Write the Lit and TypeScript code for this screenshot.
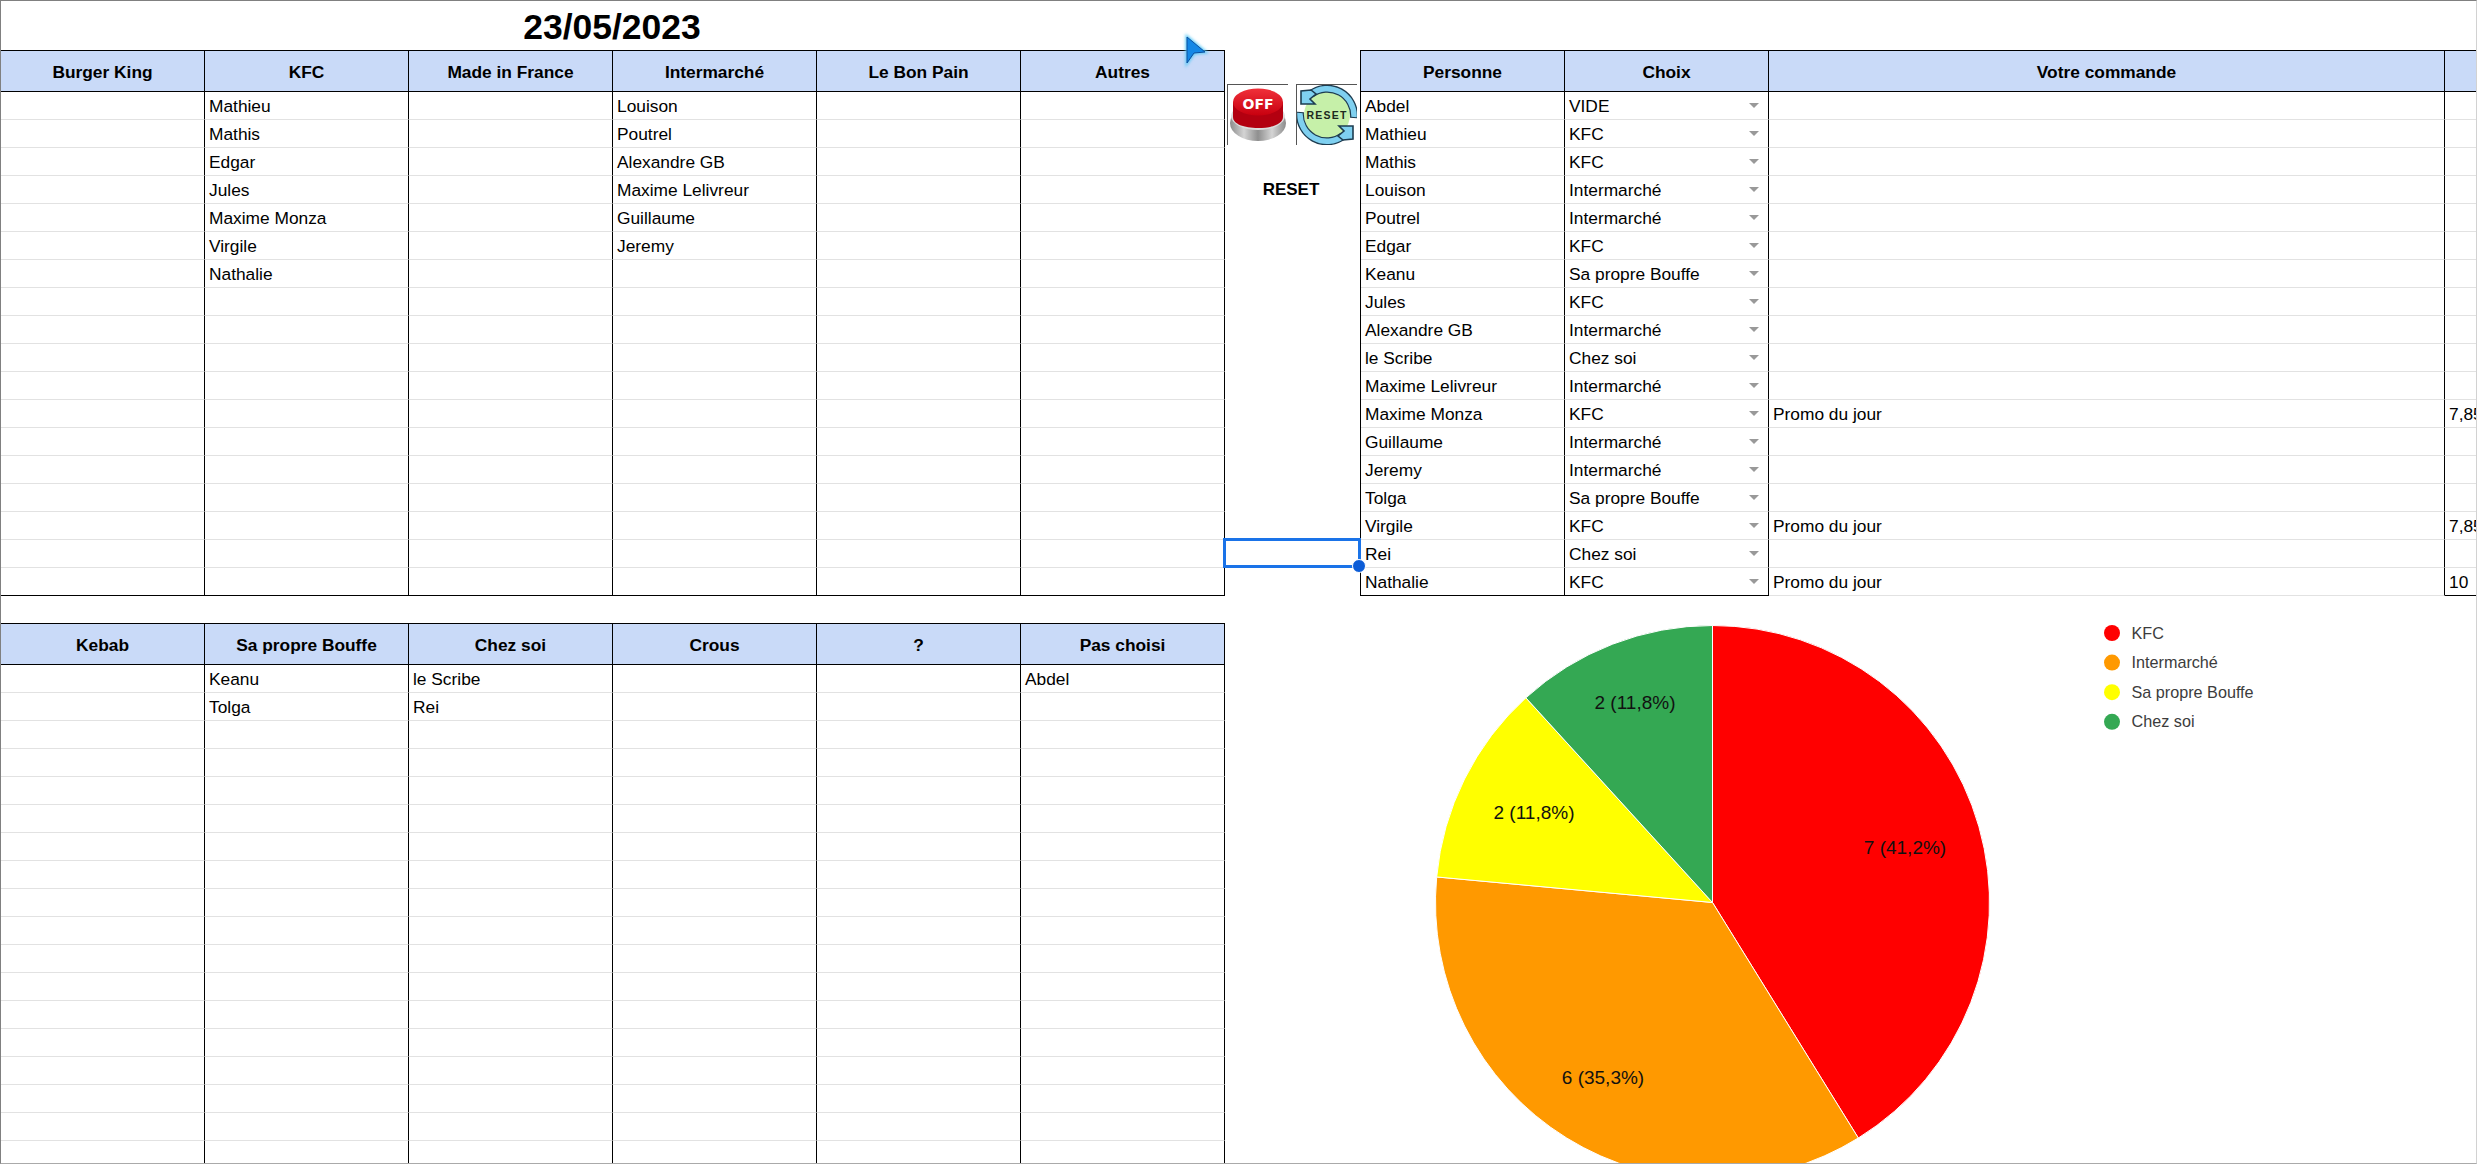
import { LitElement, html, css, svg } from "lit";
import { customElement } from "lit/decorators.js";
import { classMap } from "lit/directives/class-map.js";

const TOP_HEADERS = ["Burger King", "KFC", "Made in France", "Intermarché", "Le Bon Pain", "Autres"];
const BOTTOM_HEADERS = ["Kebab", "Sa propre Bouffe", "Chez soi", "Crous", "?", "Pas choisi"];

// one list per column, empty rows are filled in at render time
const TOP_COLUMNS: string[][] = [
  [],
  ["Mathieu", "Mathis", "Edgar", "Jules", "Maxime Monza", "Virgile", "Nathalie"],
  [],
  ["Louison", "Poutrel", "Alexandre GB", "Maxime Lelivreur", "Guillaume", "Jeremy"],
  [],
  [],
];
const BOTTOM_COLUMNS: string[][] = [[], ["Keanu", "Tolga"], ["le Scribe", "Rei"], [], [], ["Abdel"]];

const ORDERS: [string, string, string?, string?][] = [
  ["Abdel", "VIDE"],
  ["Mathieu", "KFC"],
  ["Mathis", "KFC"],
  ["Louison", "Intermarché"],
  ["Poutrel", "Intermarché"],
  ["Edgar", "KFC"],
  ["Keanu", "Sa propre Bouffe"],
  ["Jules", "KFC"],
  ["Alexandre GB", "Intermarché"],
  ["le Scribe", "Chez soi"],
  ["Maxime Lelivreur", "Intermarché"],
  ["Maxime Monza", "KFC", "Promo du jour", "7,85"],
  ["Guillaume", "Intermarché"],
  ["Jeremy", "Intermarché"],
  ["Tolga", "Sa propre Bouffe"],
  ["Virgile", "KFC", "Promo du jour", "7,85"],
  ["Rei", "Chez soi"],
  ["Nathalie", "KFC", "Promo du jour", "10"],
];

const SLICES = [
  { name: "KFC", value: 7, color: "#ff0000", label: "7 (41,2%)", x: 680, y: 224 },
  { name: "Intermarché", value: 6, color: "#ff9900", label: "6 (35,3%)", x: 378, y: 454 },
  { name: "Sa propre Bouffe", value: 2, color: "#ffff00", label: "2 (11,8%)", x: 309, y: 189 },
  { name: "Chez soi", value: 2, color: "#34a853", label: "2 (11,8%)", x: 410, y: 79 },
];

const PIE = { cx: 487.5, cy: 279.5, r: 277 };

function slicePath(from: number, to: number) {
  const point = (t: number) => {
    const a = (t / 17) * Math.PI * 2;
    return `${PIE.cx + PIE.r * Math.sin(a)} ${PIE.cy - PIE.r * Math.cos(a)}`;
  };
  const large = to - from > 8.5 ? 1 : 0;
  return `M${PIE.cx} ${PIE.cy}L${point(from)}A${PIE.r} ${PIE.r} 0 ${large} 1 ${point(to)}Z`;
}

@customElement("app-root")
export class AppRoot extends LitElement {
  static styles = css`
    :host {
      display: block;
      width: 2485px;
      height: 1164px;
      overflow: hidden;
      background: #fff;
      font-family: "Liberation Sans", Arial, sans-serif;
      color: #000;
    }
    .frame {
      position: relative;
      box-sizing: border-box;
      width: 2477px;
      height: 1164px;
      overflow: hidden;
      border-top: 1px solid #808080;
      border-left: 1px solid #808080;
      border-right: 1px solid #d2d2d2;
      border-bottom: 1px solid #aaaaaa;
    }
    .title {
      width: 1222px;
      height: 49px;
      display: flex;
      justify-content: center;
      align-items: flex-end;
      font-size: 35.5px;
      font-weight: 700;
      line-height: 46px;
    }
    .top {
      display: flex;
      height: 546px;
    }
    .bottom {
      display: flex;
      margin-top: 27px;
    }
    .table {
      display: grid;
      flex: none;
      align-content: start;
    }
    .six {
      grid-template-columns: repeat(6, 204px);
    }
    .orders {
      grid-template-columns: 204px 204px 676px 31px;
      border-left: 1px solid #000;
    }
    .cell {
      box-sizing: border-box;
      height: 28px;
      padding: 2px 0 0 4px;
      font-size: 17.33px;
      line-height: 25px;
      white-space: nowrap;
      overflow: hidden;
      position: relative;
      border-right: 1px solid #000;
      border-bottom: 1px solid #e2e2e2;
    }
    .cell.last {
      border-bottom-color: #000;
    }
    .head {
      box-sizing: border-box;
      height: 42px;
      display: flex;
      align-items: center;
      justify-content: center;
      padding-top: 2px;
      background: #c9daf8;
      font-size: 17.33px;
      font-weight: 700;
      border-top: 1px solid #000;
      border-right: 1px solid #000;
      border-bottom: 1px solid #000;
    }
    .orders .end {
      border-right: none;
    }
    .arrow {
      position: absolute;
      right: 9px;
      top: 11px;
      width: 0;
      height: 0;
      border-left: 5px solid transparent;
      border-right: 5px solid transparent;
      border-top: 5px solid #999;
    }
    .middle {
      position: relative;
      z-index: 1;
      flex: none;
      box-sizing: border-box;
      width: 135px;
      padding: 34px 0 0 2px;
    }
    .buttons {
      display: flex;
      gap: 8px;
    }
    .pic {
      display: block;
      width: 61px;
      height: 61px;
      box-sizing: border-box;
      border-top: 1px solid #555;
      border-left: 1px solid #555;
    }
    .reset {
      margin: 35px 0 0 -5px;
      text-align: center;
      font-size: 17px;
      font-weight: 700;
      line-height: 20px;
    }
    .selection {
      position: absolute;
      left: -2px;
      top: 488px;
      box-sizing: border-box;
      width: 138px;
      height: 30px;
      border: 3px solid #1a73e8;
    }
    .handle {
      position: absolute;
      right: -8px;
      bottom: -8px;
      box-sizing: border-box;
      width: 14px;
      height: 14px;
      border-radius: 50%;
      background: #0b5cd7;
      border: 1px solid #fff;
    }
    .cursor {
      position: absolute;
      left: 1178px;
      top: 28px;
      width: 36px;
      height: 44px;
    }
    .chart {
      display: block;
      flex: none;
    }
    .chart text {
      font-family: "Liberation Sans", Arial, sans-serif;
    }
  `;

  private gridCells(columns: string[][]) {
    const cells = [];
    for (let row = 0; row < 18; row++) {
      for (const col of columns) {
        cells.push(html`<div class=${classMap({ cell: true, last: row === 17 })}>${col[row] ?? ""}</div>`);
      }
    }
    return cells;
  }

  private orderRows() {
    return ORDERS.map(([person, choice, order, price], i) => {
      const last = i === ORDERS.length - 1;
      return html`
        <div class=${classMap({ cell: true, last })}>${person}</div>
        <div class=${classMap({ cell: true, last })}>${choice}<span class="arrow"></span></div>
        <div class="cell">${order ?? ""}</div>
        <div class=${classMap({ cell: true, last, end: true })}>${price ?? ""}</div>
      `;
    });
  }

  private offButton() {
    return html`<svg class="pic" viewBox="0 0 60 60">
      <defs>
        <linearGradient id="silver" x1="0" x2="1" y1="0" y2="0">
          <stop offset="0" stop-color="#8c8c8c" />
          <stop offset="0.25" stop-color="#d4d4d4" />
          <stop offset="0.5" stop-color="#8f8f8f" />
          <stop offset="0.75" stop-color="#d4d4d4" />
          <stop offset="1" stop-color="#8c8c8c" />
        </linearGradient>
        <linearGradient id="redtop" x1="0" x2="0" y1="0" y2="1">
          <stop offset="0" stop-color="#f0303a" />
          <stop offset="1" stop-color="#c8000f" />
        </linearGradient>
      </defs>
      <ellipse cx="30" cy="38" rx="28" ry="18" fill="url(#silver)" />
      <ellipse cx="30" cy="31" rx="27" ry="14" fill="#dcdcdc" />
      <path d="M5 17v15c0 7 11 11 25 11s25-4 25-11V17z" fill="#b30010" />
      <ellipse cx="30" cy="17" rx="25" ry="13.5" fill="url(#redtop)" />
      <text x="30" y="23.5" text-anchor="middle" font-family="DejaVu Sans" font-weight="700" font-size="14" fill="#fff">OFF</text>
    </svg>`;
  }

  private resetButton() {
    return html`<svg class="pic" viewBox="0 0 60 60">
      <circle cx="30" cy="30" r="23" fill="#c6f0a9" />
      <g fill="none">
        <path d="M14 9A27 27 0 0 1 57 33" stroke="#1d3c50" stroke-width="8" />
        <path d="M14 9A27 27 0 0 1 57 32" stroke="#7fd0f0" stroke-width="5.5" />
        <path d="M3 27A27 27 0 0 0 46 51" stroke="#1d3c50" stroke-width="8" />
        <path d="M3 28A27 27 0 0 0 46 51" stroke="#7fd0f0" stroke-width="5.5" />
      </g>
      <path d="M4 6v13h14l-5-5 6-5-5-4z" fill="#7fd0f0" stroke="#1d3c50" stroke-width="1.6" />
      <path d="M56 54V41H42l5 5-6 5 5 4z" fill="#7fd0f0" stroke="#1d3c50" stroke-width="1.6" />
      <text x="30" y="34" text-anchor="middle" font-family="Liberation Sans" font-weight="700" font-size="10.5" letter-spacing="1.2" fill="#1d2a20">RESET</text>
    </svg>`;
  }

  private chart() {
    let t = 0;
    const wedges = SLICES.map((s) => {
      const d = slicePath(t, t + s.value);
      t += s.value;
      return svg`<path d=${d} fill=${s.color} stroke="#fff" stroke-width="1" />`;
    });
    const labels = SLICES.map(
      (s) => svg`<text x=${s.x} y=${s.y} text-anchor="middle" dominant-baseline="central" font-size="19" fill="#111">${s.label}</text>`
    );
    const legend = SLICES.map((s, i) => {
      const y = 10 + i * 29.6;
      return svg`
        <circle cx="887" cy=${y} r="8" fill=${s.color} />
        <text x="906.5" y=${y + 5.5} font-size="16.2" fill="#3c3c3c">${s.name}</text>
      `;
    });
    return html`<svg class="chart" width="1251" height="540" viewBox="0 0 1251 540">${wedges}${labels}${legend}</svg>`;
  }

  render() {
    return html`
      <div class="frame">
        <div class="title">23/05/2023</div>
        <div class="top">
          <div class="table six">
            ${TOP_HEADERS.map((h) => html`<div class="head">${h}</div>`)} ${this.gridCells(TOP_COLUMNS)}
          </div>
          <div class="middle">
            <div class="buttons">${this.offButton()} ${this.resetButton()}</div>
            <div class="reset">RESET</div>
            <div class="selection"><span class="handle"></span></div>
          </div>
          <div class="table orders">
            <div class="head">Personne</div>
            <div class="head">Choix</div>
            <div class="head">Votre commande</div>
            <div class="head end"></div>
            ${this.orderRows()}
          </div>
        </div>
        <div class="bottom">
          <div class="table six">
            ${BOTTOM_HEADERS.map((h) => html`<div class="head">${h}</div>`)} ${this.gridCells(BOTTOM_COLUMNS)}
          </div>
          ${this.chart()}
        </div>
        <svg class="cursor" viewBox="0 0 36 44">
          <defs>
            <filter id="glow" x="-40%" y="-40%" width="180%" height="180%">
              <feGaussianBlur stdDeviation="1.6" />
            </filter>
          </defs>
          <path d="M8 8l18 15-11 1-7 10z" fill="#58c8f5" stroke="#58c8f5" stroke-width="3" filter="url(#glow)" />
          <path d="M8 8l18 15-11 1-7 10z" fill="#1488e6" stroke="#0c4f9e" stroke-width="1" />
        </svg>
      </div>
    `;
  }
}
